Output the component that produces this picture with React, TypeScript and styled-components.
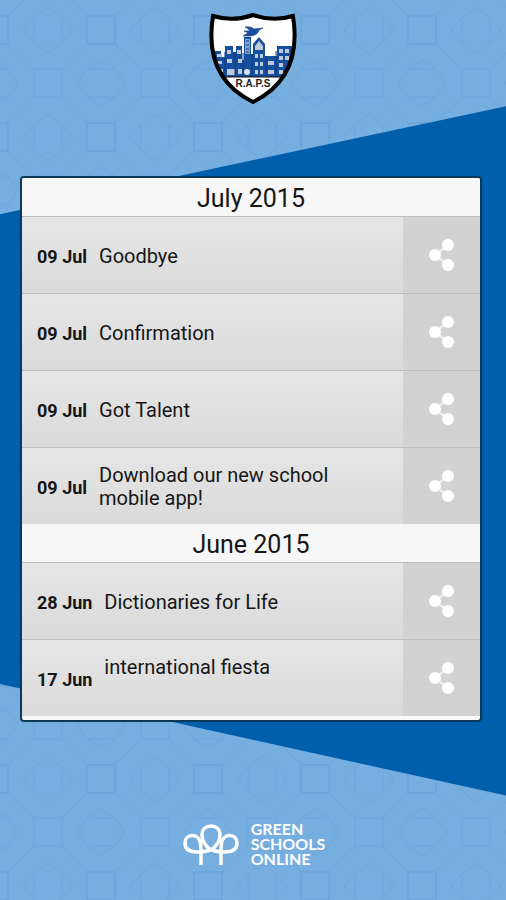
import React from "react";
import styled, { createGlobalStyle } from "styled-components";

const GlobalStyle = createGlobalStyle`
  *, *::before, *::after { box-sizing: border-box; }
  body { margin: 0; background: #76aedf; font-family: Roboto, "Noto Sans", sans-serif; color: #161616; }
`;

const Page = styled.div`
  position: relative;
  isolation: isolate;
  display: flex;
  flex-direction: column;
  min-height: 100vh;
  padding: 13px 24px 32px 20px;
  overflow: hidden;
`;

const Backdrop = styled.div`
  position: absolute;
  inset: 0;
  z-index: -1;

  svg { display: block; width: 100%; height: 100%; }

  &::after {
    content: "";
    position: absolute;
    inset: 0;
    background: #005fad;
    clip-path: polygon(0 23.8%, 100% 11.8%, 100% 88.4%, 0 76%);
  }
`;

const Masthead = styled.header`
  display: flex;
  justify-content: center;
  margin-bottom: 71px;
  padding-left: 4px;

  svg { display: block; width: 88px; height: 92px; }
`;

const Board = styled.main`
  background: #fafafa;
  border: 2px solid #0b3a59;
  border-radius: 4px;
  padding-bottom: 4px;
  overflow: hidden;
`;

const MonthTitle = styled.h2`
  margin: 0;
  height: 38px;
  line-height: 42px;
  text-align: center;
  font-size: 25px;
  font-weight: 400;
  background: #f7f7f7;
`;

const EventList = styled.ul`
  margin: 0;
  padding: 0;
  list-style: none;
`;

const EventRow = styled.li`
  display: flex;
  min-height: 77px;
  border-top: 1px solid #bdbdbd;
  background: linear-gradient(#e6e6e6, #dadada);
`;

const EventInfo = styled.div`
  flex: 1;
  display: flex;
  align-items: center;
  gap: 12px;
  padding: 2px 16px 0 15px;
`;

const EventDate = styled.time`
  font-size: 18px;
  font-weight: 700;
  white-space: nowrap;
`;

const EventName = styled.span<{ $tall?: boolean }>`
  max-width: 264px;
  min-height: ${(p) => (p.$tall ? "46px" : "0")};
  font-size: 20px;
  line-height: 23px;
`;

const ShareButton = styled.button`
  display: flex;
  align-items: center;
  justify-content: center;
  width: 77px;
  border: 0;
  padding: 0;
  background: #d2d2d2;
  cursor: pointer;
`;

const Footer = styled.footer`
  display: flex;
  align-items: center;
  justify-content: center;
  gap: 12px;
  margin-top: auto;
  padding-left: 6px;
  color: #fff;
`;

const BrandName = styled.div`
  padding-bottom: 2px;
  font: 700 16px/15px Lato, sans-serif;
`;

type SchoolEvent = { date: string; iso: string; name: string; tall?: boolean };

const months: { title: string; events: SchoolEvent[] }[] = [
  {
    title: "July 2015",
    events: [
      { date: "09 Jul", iso: "2015-07-09", name: "Goodbye" },
      { date: "09 Jul", iso: "2015-07-09", name: "Confirmation" },
      { date: "09 Jul", iso: "2015-07-09", name: "Got Talent" },
      { date: "09 Jul", iso: "2015-07-09", name: "Download our new school mobile app!" },
    ],
  },
  {
    title: "June 2015",
    events: [
      { date: "28 Jun", iso: "2015-06-28", name: "Dictionaries for Life" },
      { date: "17 Jun", iso: "2015-06-17", name: "international fiesta", tall: true },
    ],
  },
];

const Tiles = () => (
  <svg aria-hidden="true">
    <defs>
      <pattern id="tiles" x="48" y="-24" width="107" height="107" patternUnits="userSpaceOnUse">
        <g fill="none" stroke="#4482bd" strokeOpacity="0.1" strokeWidth="1.500">
          <path d="M39 40h28v28h-28z" strokeOpacity="0.2" />
          <path d="M39 40L25 26M67 40L81 26M39 68L25 82M67 68L81 82" />
          <path d="M0 14H14V0M93 0V14H107M0 93H14V107M93 107V93H107" />
          <path d="M14 14L25 26M93 14L81 26M14 93L25 82M93 93L81 82" />
          <path d="M0 31L14 42L25 54L14 66L0 78M107 31L93 42L82 54L93 66L107 78M14 42V66M93 42V66" />
          <path d="M29 0L39 14L53 23L67 14L77 0M29 107L39 93L53 84L67 93L77 107M39 14H67M39 93H67" />
        </g>
      </pattern>
    </defs>
    <rect width="100%" height="100%" fill="url(#tiles)" />
  </svg>
);

const Crest = () => (
  <svg viewBox="0 0 88 92" role="img" aria-label="R.A.P.S crest">
    <defs>
      <clipPath id="shield">
        <path d="M6 4Q25 9 44 3Q63 9 82 4C88 32 84 68 44 88C4 68 0 32 6 4Z" />
      </clipPath>
    </defs>
    <path d="M6 4Q25 9 44 3Q63 9 82 4C88 32 84 68 44 88C4 68 0 32 6 4Z" fill="#fff" />
    <g clipPath="url(#shield)">
      <path d="M3 38h9v6h4V33h8v6h3v-6h6v14h2V24h7v17h2V31l6-7 6 7v12h12V33h15v31H3z" fill="#174f9f" />
      <path d="M36 26h5v15h-5z" fill="#7fa4d4" />
      <circle cx="38" cy="59" r="3" fill="#dbe5f1" />
      <path d="M37 28h3M37 32h3M37 36h3M37 39h3" stroke="#173c78" />
      <path d="M46 33l4-5 4 5v4h-8zM46 41h3v4h-3zM51 41h3v4h-3zM46 49h3v4h-3zM51 49h3v4h-3zM46 57h3v4h-3zM51 57h3v4h-3zM59 48h6v4h-6zM59 57h6v4h-6zM70 36h4v4h-4zM76 36h4v4h-4zM70 43h4v4h-4zM76 43h4v4h-4zM70 50h4v4h-4zM70 57h4v4h-4zM18 37h4v4h-4zM28 37h4v4h-4zM18 46h5v4h-5zM29 46h4v4h-4zM18 56h8v6h-8zM29 56h4v5h-4zM8 41h5v3H8zM8 48h5v3H8zM10 56h4v3h-4z" fill="#c0c9d6" />
      <path d="M16 39v24M26 39v24M34 40v23M43 42v21M57 44v19M67 38v25" stroke="#103a7c" />
      <path d="M3 64h82" stroke="#111" />
    </g>
    <path d="M36 14q6-1 9 2l9-1-4 2q-1 5-8 6l-8 0 5-3-4-2 6 0q-2-3-5-4z" fill="#174f9f" stroke="#173c78" strokeWidth="0.600" />
    <text x="44" y="74" textAnchor="middle" fontFamily="Liberation Sans, sans-serif" fontSize="10" fontWeight="700" fill="#222">R.A.P.S</text>
    <path d="M4 3Q24 9 44 2Q64 9 84 3C89 34 85 69 44 89C3 69 -1 34 4 3Z" fill="none" stroke="#000" strokeWidth="4" />
  </svg>
);

const ShareIcon = () => (
  <svg width="26" height="34" viewBox="0 0 26 34" aria-hidden="true">
    <path d="M19 7L6 17l13 10" fill="none" stroke="#efefef" strokeWidth="2.500" />
    <g fill="#fff">
      <circle cx="6" cy="17" r="6" />
      <circle cx="19" cy="7" r="6" />
      <circle cx="19" cy="27" r="6" />
    </g>
  </svg>
);

const TreesIcon = () => (
  <svg width="56" height="44" viewBox="0 0 56 44" aria-hidden="true">
    <g fill="none" stroke="#fff" strokeWidth="3.500">
      <path d="M28 27C21 22 19 17 19 12C19 6 23 3 28 3C33 3 37 6 37 12C37 17 35 22 28 27Z" />
      <path d="M18 42V31C18 25 18 22 17 18C14 10 2 11 2 20C2 27 8 29 14 29C20 29 24 29 28 26" />
      <path d="M38 42V31C38 25 38 22 39 18C42 10 54 11 54 20C54 27 48 29 42 29C36 29 32 29 28 26" />
    </g>
  </svg>
);

export default function App() {
  return (
    <Page>
      <GlobalStyle />
      <Backdrop><Tiles /></Backdrop>
      <Masthead><Crest /></Masthead>
      <Board>
        {months.map((month) => (
          <section key={month.title}>
            <MonthTitle>{month.title}</MonthTitle>
            <EventList>
              {month.events.map((event) => (
                <EventRow key={event.name}>
                  <EventInfo>
                    <EventDate dateTime={event.iso}>{event.date}</EventDate>
                    <EventName $tall={event.tall}>{event.name}</EventName>
                  </EventInfo>
                  <ShareButton type="button" aria-label={`Share ${event.name}`}>
                    <ShareIcon />
                  </ShareButton>
                </EventRow>
              ))}
            </EventList>
          </section>
        ))}
      </Board>
      <Footer>
        <TreesIcon />
        <BrandName>GREEN<br />SCHOOLS<br />ONLINE</BrandName>
      </Footer>
    </Page>
  );
}
